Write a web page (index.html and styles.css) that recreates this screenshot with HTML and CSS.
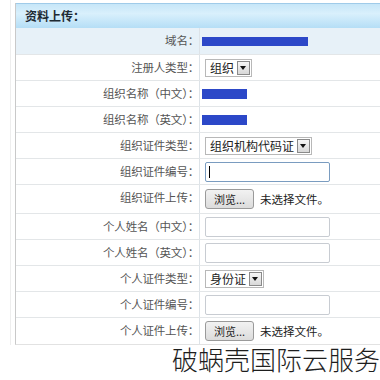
FILE: index.html
```html
<!DOCTYPE html>
<html lang="zh">
<head>
<meta charset="utf-8">
<link rel="stylesheet" href="styles.css">
</head>
<body>
<div class="page">
  <div class="panel">
    <div class="head">资料上传：</div>
    <div class="row alt"><div class="lab">域名：</div><div class="val"><span class="redact r1"></span></div></div>
    <div class="row"><div class="lab">注册人类型：</div><div class="val"><span class="sel"><span class="opt">组织</span><span class="arr"></span></span></div></div>
    <div class="row"><div class="lab">组织名称（中文）：</div><div class="val"><span class="redact r2"></span></div></div>
    <div class="row"><div class="lab">组织名称（英文）：</div><div class="val"><span class="redact r2"></span></div></div>
    <div class="row"><div class="lab">组织证件类型：</div><div class="val"><span class="sel"><span class="opt">组织机构代码证</span><span class="arr"></span></span></div></div>
    <div class="row"><div class="lab">组织证件编号：</div><div class="val"><span class="inp focus"><span class="caret"></span></span></div></div>
    <div class="row up"><div class="lab">组织证件上传：</div><div class="val"><span class="btn">浏览...</span><span class="nofile">未选择文件。</span></div></div>
    <div class="row"><div class="lab">个人姓名（中文）：</div><div class="val"><span class="inp"></span></div></div>
    <div class="row"><div class="lab">个人姓名（英文）：</div><div class="val"><span class="inp"></span></div></div>
    <div class="row"><div class="lab">个人证件类型：</div><div class="val"><span class="sel"><span class="opt">身份证</span><span class="arr"></span></span></div></div>
    <div class="row"><div class="lab">个人证件编号：</div><div class="val"><span class="inp"></span></div></div>
    <div class="row up2"><div class="lab">个人证件上传：</div><div class="val"><span class="btn">浏览...</span><span class="nofile">未选择文件。</span></div></div>
  </div>
  <div class="brand">破蜗壳国际云服务</div>
</div>
</body>
</html>
```
FILE: styles.css
```css
html, body { margin: 0; padding: 0; background: #fff; }
body { width: 380px; height: 380px; overflow: hidden; font-family: "Noto Sans CJK SC", "Microsoft YaHei", sans-serif; }
.page { position: relative; padding-top: 3px; }
.page::before { content: ""; position: absolute; left: 10px; top: 0; width: 1px; height: 345px; background: #eeeeee; }
.panel { margin-left: 15px; width: 380px; border-left: 1px solid #c9c9c9; border-bottom: 1px solid #e2e2e2; }
.head { height: 25px; box-sizing: border-box; border-top: 1px solid #9fcbe9; background: linear-gradient(#c6e6f8, #d9f0fc 40%, #b5def6); font-size: 12px; font-weight: bold; color: #1d2a33; line-height: 24px; padding-left: 9px; }
.row { display: grid; grid-template-columns: 184px 1fr; height: 26px; border-top: 1px solid #e3e6e8; box-sizing: border-box; }
.row.alt { background: #e7f1f8; border-top: none; }
.row.up { height: 29px; }
.row.up2 { height: 27px; }
.lab { font-size: 11.5px; color: #555; text-align: right; line-height: 25px; border-right: 1px solid #dde3e8; padding-right: 0; white-space: nowrap; letter-spacing: -0.2px; }
.val { display: flex; align-items: center; padding-left: 5px; }
.redact { display: block; background: #2c48c8; height: 9px; }
.r1 { width: 106px; margin-left: -3px; }
.r2 { width: 45px; margin-left: -3px; height: 10px; }
.sel { display: flex; align-items: center; height: 18px; border: 1px solid #b8b8b8; background: #fff; box-sizing: border-box; }
.opt { font-size: 12px; color: #222; padding: 0 3px 0 4px; line-height: 16px; }
.arr { position: relative; width: 13px; height: 14px; margin-right: 1px; border: 1px solid #8a8a8a; box-sizing: border-box; background: linear-gradient(#f6f6f6, #d8d8d8); }
.arr::after { content: ""; position: absolute; left: 2px; top: 4px; border-left: 3.5px solid transparent; border-right: 3.5px solid transparent; border-top: 4px solid #111; }
.inp { display: block; width: 125px; height: 20px; border: 1px solid #c8ccd2; border-radius: 2px; box-sizing: border-box; background: #fff; position: relative; }
.inp.focus { border-color: #7a9cc0; }
.caret { position: absolute; left: 3px; top: 3px; width: 1px; height: 12px; background: #000; }
.btn { display: block; width: 49px; height: 20px; box-sizing: border-box; border: 1px solid #9a9a9a; border-radius: 3px; background: linear-gradient(#f2f2f2, #dcdcdc); font-size: 11px; color: #222; line-height: 18px; text-align: center; }
.nofile { font-size: 11.5px; color: #222; margin-left: 6px; }
.brand { position: absolute; left: 172px; top: 343px; font-size: 26px; color: #1e1e1e; font-weight: 300; letter-spacing: 0; line-height: 32px; white-space: nowrap; }
```
